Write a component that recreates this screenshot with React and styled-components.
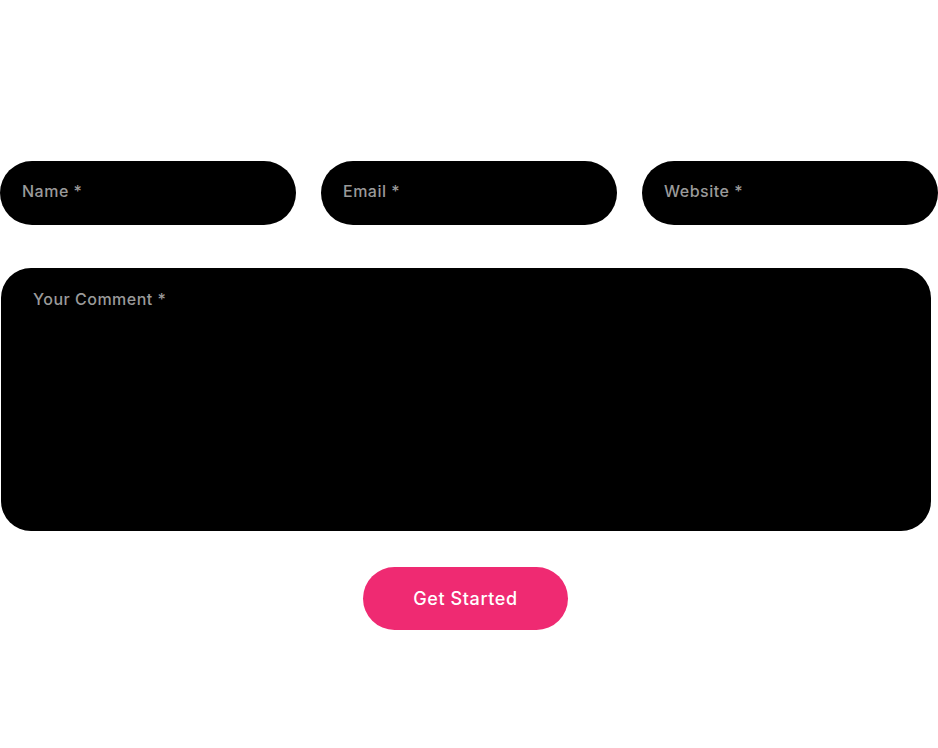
import React from 'react'
import styled, {createGlobalStyle} from 'styled-components';

const GlobalStyle = createGlobalStyle`
    body{
        margin: 0;
        background: #fff;
        font-family: "Inter", "Open Sans", sans-serif;
    }
`;

function App() {
    return (
        <>
            <GlobalStyle />
            <FormStyled onSubmit={(e) => e.preventDefault()}>
                <div className="inputs">
                    <Field type="text" placeholder="Name *" />
                    <Field type="email" placeholder="Email *" />
                    <Field type="text" placeholder="Website *" />
                </div>
                <Comment placeholder="Your Comment *" />
                <div className="actions">
                    <SubmitButton type="submit">Get Started</SubmitButton>
                </div>
            </FormStyled>
        </>
    )
}

const FormStyled = styled.form`
    width: 938px;
    padding-top: 161px;
    .inputs{
        display: grid;
        grid-template-columns: repeat(3, 296px);
        column-gap: 25px;
    }
    .actions{
        width: 931px;
        display: flex;
        justify-content: center;
        margin-top: 36px;
    }
`;

const Field = styled.input`
    box-sizing: border-box;
    height: 64px;
    width: 100%;
    border: none;
    outline: none;
    border-radius: 32px;
    background: #000;
    color: #fff;
    padding: 0 22px 4px;
    font-family: inherit;
    font-size: 16px;
    font-weight: 500;
    letter-spacing: 0.5px;
    &::placeholder{
        color: #9a9a9a;
    }
`;

const Comment = styled.textarea`
    display: block;
    box-sizing: border-box;
    margin: 43px 0 0 1px;
    width: 930px;
    height: 263px;
    border: none;
    outline: none;
    resize: none;
    border-radius: 30px;
    background: #000;
    color: #fff;
    padding: 21px 32px;
    font-family: inherit;
    font-size: 16px;
    font-weight: 500;
    letter-spacing: 0.5px;
    &::placeholder{
        color: #9a9a9a;
    }
`;

const SubmitButton = styled.button`
    width: 205px;
    height: 63px;
    border: none;
    border-radius: 32px;
    background: #ef2a72;
    color: #fff;
    font-family: inherit;
    font-size: 18px;
    font-weight: 500;
    letter-spacing: 0.6px;
    cursor: pointer;
`;

export default App;
